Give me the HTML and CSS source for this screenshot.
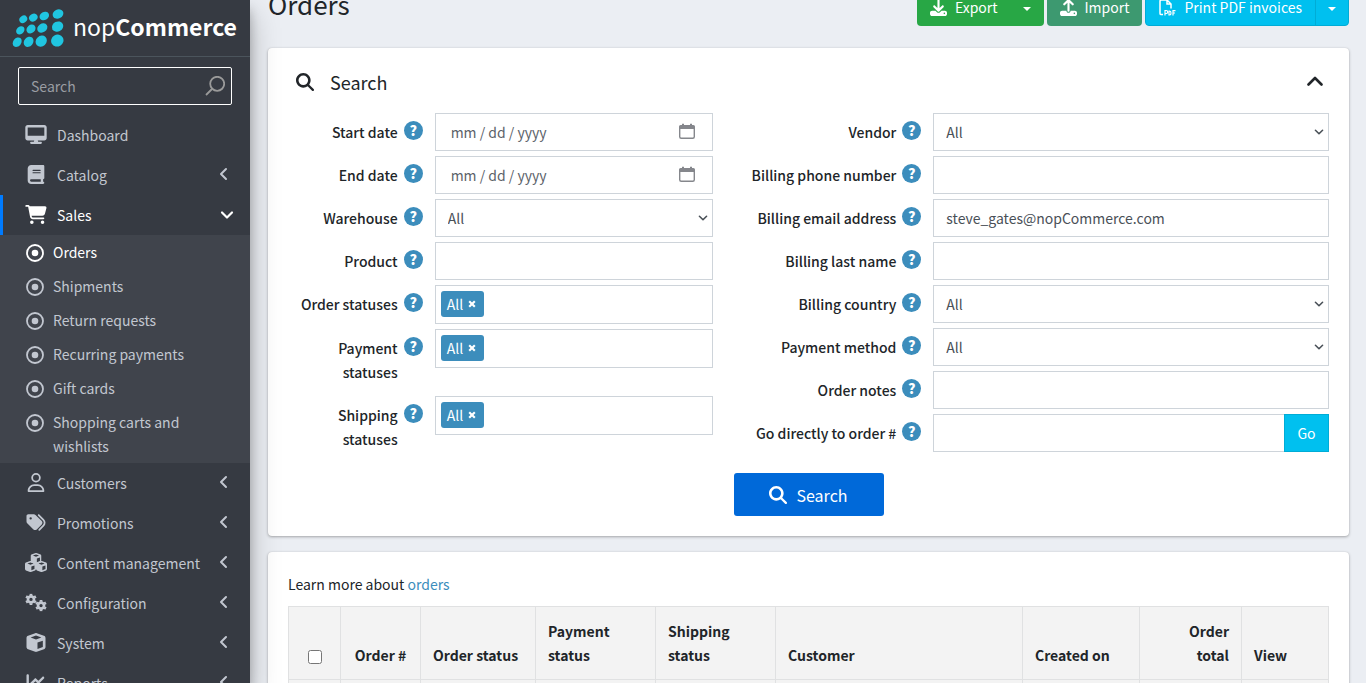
FILE: index.html
```html
<!DOCTYPE html>
<html lang="en">
<head>
<meta charset="utf-8">
<title>Orders / nopCommerce administration</title>
<link rel="stylesheet" href="styles.css">
</head>
<body>
<svg class="sprite" aria-hidden="true">
  <symbol id="i-search" viewBox="0 0 512 512"><path d="M416 208c0 45.900-14.900 88.300-40 122.700L502.600 457.400c12.500 12.500 12.500 32.800 0 45.300s-32.800 12.500-45.300 0L330.700 376c-34.400 25.200-76.800 40-122.700 40C93.100 416 0 322.900 0 208S93.100 0 208 0S416 93.100 416 208zM208 344a136 136 0 1 0 0-272 136 136 0 1 0 0 272z"/></symbol>
  <symbol id="i-left" viewBox="0 0 10 14"><path d="M8 2L3 7l5 5" fill="none" stroke="currentColor" stroke-width="2" stroke-linecap="round" stroke-linejoin="round"/></symbol>
  <symbol id="i-down" viewBox="0 0 14 10"><path d="M2 2.500l5 5 5-5" fill="none" stroke="currentColor" stroke-width="2.200" stroke-linecap="round" stroke-linejoin="round"/></symbol>
  <symbol id="i-dot" viewBox="0 0 18 18"><circle cx="9" cy="9" r="8" fill="none" stroke="currentColor" stroke-width="1.800"/><circle cx="9" cy="9" r="3.300"/></symbol>
  <symbol id="i-x" viewBox="0 0 8 8"><path d="M1.200 1.200l5.600 5.600M6.800 1.200L1.200 6.800" stroke="currentColor" stroke-width="2.100"/></symbol>
  <symbol id="i-cal" viewBox="0 0 18 18"><path d="M1 6V4a2 2 0 0 1 2-2h1V1q1-1 2 0v1h6V1q1-1 2 0v1h1a2 2 0 0 1 2 2v2z"/><rect x="1.700" y="3" width="14.600" height="12.300" rx="1.500" fill="none" stroke="currentColor" stroke-width="1.400"/></symbol>
  <symbol id="i-cube" viewBox="0 0 512 512"><path fill-rule="evenodd" d="M234.500 5.700c13.900-5 29.100-5 43.100 0l192 68.600C495 83.400 512 107.500 512 134.600V377.400c0 27-17 51.200-42.500 60.300l-192 68.600c-13.900 5-29.100 5-43.100 0l-192-68.600C17 428.600 0 404.500 0 377.400V134.600c0-27 17-51.200 42.500-60.300l192-68.600zM256 66L112 122 256 174l144-52L256 66zm40 362l144-51v-170L296 258z"/></symbol>
  <symbol id="i-cog" viewBox="0 0 20 20"><circle cx="10" cy="10" r="5" fill="none" stroke="currentColor" stroke-width="4.400"/><path d="M10 0.500v3M10 16.500v3M1.800 5.200l2.600 1.500M15.600 13.300l2.600 1.500M1.800 14.800l2.600-1.500M15.600 6.700l2.600-1.500" stroke="currentColor" stroke-width="4.600"/></symbol>
</svg>

<aside class="sidebar">
  <a class="brand" href="#">
    <svg class="brand-mark" viewBox="0 0 54 40" aria-hidden="true">
      <g fill="#20c5e0">
        <ellipse cx="11.300" cy="11.300" rx="4.200" ry="3.400" transform="rotate(-38 11.300 11.300)"/>
        <ellipse cx="21.300" cy="9.600" rx="4.500" ry="3.700" transform="rotate(-34 21.300 9.600)"/>
        <ellipse cx="32.300" cy="8" rx="5" ry="4" transform="rotate(-30 32.300 8)"/>
        <ellipse cx="46" cy="6" rx="5.500" ry="4.500" transform="rotate(-26 46 6)"/>
        <ellipse cx="8.300" cy="22.300" rx="4.600" ry="3.700" transform="rotate(-44 8.300 22.300)"/>
        <ellipse cx="19" cy="21" rx="4.900" ry="4" transform="rotate(-40 19 21)"/>
        <ellipse cx="30.300" cy="20" rx="5.400" ry="4.300" transform="rotate(-34 30.300 20)"/>
        <ellipse cx="45.600" cy="18.600" rx="5.800" ry="5" transform="rotate(-26 45.600 18.600)"/>
        <ellipse cx="5.200" cy="34.200" rx="5.200" ry="4" transform="rotate(-52 5.200 34.200)"/>
        <ellipse cx="16.600" cy="33.800" rx="5.500" ry="4.500" transform="rotate(-50 16.600 33.800)"/>
        <ellipse cx="29.200" cy="33.200" rx="6" ry="5.200" transform="rotate(-44 29.200 33.200)"/>
        <ellipse cx="45.300" cy="32.600" rx="6.300" ry="5.900" transform="rotate(-30 45.300 32.600)"/>
      </g>
    </svg>
    <span class="brand-name">nop<b>Commerce</b></span>
  </a>
  <form class="side-search">
    <input type="text" placeholder="Search" aria-label="Search menu">
    <svg class="lens" viewBox="0 0 20 20" aria-hidden="true"><circle cx="12.200" cy="7.800" r="7" /><path d="M7 13l-6 6"/></svg>
  </form>
  <nav>
    <ul class="menu">
      <li><a class="item" href="#"><svg class="ico" viewBox="0 0 576 512"><path fill-rule="evenodd" d="M64 0C28.700 0 0 28.700 0 64V352c0 35.300 28.700 64 64 64H240l-10.700 32H160c-17.700 0-32 14.300-32 32s14.300 32 32 32H416c17.700 0 32-14.300 32-32s-14.300-32-32-32H346.700L336 416H512c35.300 0 64-28.700 64-64V64c0-35.300-28.700-64-64-64H64zM512 64V288H64V64H512z"/></svg><span>Dashboard</span></a></li>
      <li><a class="item" href="#"><svg class="ico" viewBox="0 0 448 512"><path fill-rule="evenodd" d="M96 0C43 0 0 43 0 96V416c0 53 43 96 96 96H384h32c17.700 0 32-14.300 32-32s-14.300-32-32-32V384c17.700 0 32-14.300 32-32V32c0-17.700-14.300-32-32-32H384 96zm0 384H352v64H96c-17.700 0-32-14.300-32-32s14.300-32 32-32zm32-240c0-8.800 7.200-16 16-16H336c8.800 0 16 7.200 16 16s-7.200 16-16 16H144c-8.800 0-16-7.200-16-16zm16 48H336c8.800 0 16 7.200 16 16s-7.200 16-16 16H144c-8.800 0-16-7.200-16-16s7.200-16 16-16z"/></svg><span>Catalog</span><svg class="arrow"><use href="#i-left"/></svg></a></li>
      <li>
        <a class="item open" href="#"><svg class="ico" viewBox="0 0 576 512"><path d="M0 24C0 10.700 10.700 0 24 0H69.500c22 0 41.500 12.800 50.600 32h411c26.300 0 45.500 25 38.600 50.400l-41 152.300c-8.500 31.400-37 53.300-69.500 53.300H170.700l5.400 28.500c2.200 11.300 12.100 19.500 23.600 19.500H488c13.300 0 24 10.700 24 24s-10.700 24-24 24H199.700c-34.600 0-64.300-24.600-70.700-58.500L77.400 54.500c-.7-3.800-4-6.500-7.900-6.500H24C10.700 48 0 37.300 0 24zM128 464a48 48 0 1 1 96 0 48 48 0 1 1 -96 0zm336-48a48 48 0 1 1 0 96 48 48 0 1 1 0-96z"/></svg><span>Sales</span><svg class="arrow-down"><use href="#i-down"/></svg></a>
        <ul class="submenu">
          <li><a class="sub current" href="#"><svg><use href="#i-dot"/></svg><span>Orders</span></a></li>
          <li><a class="sub" href="#"><svg><use href="#i-dot"/></svg><span>Shipments</span></a></li>
          <li><a class="sub" href="#"><svg><use href="#i-dot"/></svg><span>Return requests</span></a></li>
          <li><a class="sub" href="#"><svg><use href="#i-dot"/></svg><span>Recurring payments</span></a></li>
          <li><a class="sub" href="#"><svg><use href="#i-dot"/></svg><span>Gift cards</span></a></li>
          <li><a class="sub" href="#"><svg><use href="#i-dot"/></svg><span>Shopping carts and wishlists</span></a></li>
        </ul>
      </li>
      <li><a class="item" href="#"><svg class="ico" viewBox="0 0 448 512"><path fill-rule="evenodd" d="M304 128a80 80 0 1 0 -160 0 80 80 0 1 0 160 0zM96 128a128 128 0 1 1 256 0A128 128 0 1 1 96 128zM49.300 464H398.700c-8.900-63.300-63.300-112-129-112H178.300c-65.700 0-120.100 48.700-129 112zM0 482.300C0 383.800 79.800 304 178.300 304h91.400C368.200 304 448 383.800 448 482.300c0 16.400-13.300 29.700-29.700 29.700H29.700C13.300 512 0 498.700 0 482.300z"/></svg><span>Customers</span><svg class="arrow"><use href="#i-left"/></svg></a></li>
      <li><a class="item" href="#"><svg class="ico" viewBox="0 0 512 512"><path fill-rule="evenodd" d="M345 39.100L472.800 168.400c52.400 53 52.400 138.200 0 191.200L360.800 472.900c-9.300 9.400-24.500 9.500-33.900 .2s-9.500-24.500-.2-33.900L438.600 325.900c33.900-34.300 33.900-89.400 0-123.700L310.900 72.900c-9.300-9.400-9.200-24.600 .2-33.900s24.600-9.200 33.900 .2zM0 229.500V80C0 53.500 21.500 32 48 32H197.500c17 0 33.300 6.700 45.300 18.700l168 168c25 25 25 65.500 0 90.500L277.300 442.700c-25 25-65.500 25-90.500 0l-168-168C6.700 262.700 0 246.500 0 229.500zM144 144a32 32 0 1 0 -64 0 32 32 0 1 0 64 0z"/></svg><span>Promotions</span><svg class="arrow"><use href="#i-left"/></svg></a></li>
      <li><a class="item" href="#"><svg class="ico" viewBox="0 0 22 19"><use href="#i-cube" x="5.500" y="0" width="11" height="11"/><use href="#i-cube" x="0" y="8" width="11" height="11"/><use href="#i-cube" x="11" y="8" width="11" height="11"/></svg><span>Content management</span><svg class="arrow"><use href="#i-left"/></svg></a></li>
      <li><a class="item" href="#"><svg class="ico" viewBox="0 0 23 19"><use href="#i-cog" x="0" y="0" width="12.500" height="12.500"/><use href="#i-cog" x="10.500" y="6.500" width="12.500" height="12.500"/></svg><span>Configuration</span><svg class="arrow"><use href="#i-left"/></svg></a></li>
      <li><a class="item" href="#"><svg class="ico"><use href="#i-cube"/></svg><span>System</span><svg class="arrow"><use href="#i-left"/></svg></a></li>
      <li><a class="item" href="#"><svg class="ico" viewBox="0 0 512 512"><path d="M64 64c0-17.700-14.300-32-32-32S0 46.300 0 64V400c0 44.200 35.800 80 80 80H480c17.700 0 32-14.300 32-32s-14.300-32-32-32H80c-8.800 0-16-7.200-16-16V64zm406.600 86.600c12.500-12.500 12.500-32.800 0-45.300s-32.800-12.500-45.300 0L320 210.700l-57.400-57.400c-12.500-12.500-32.800-12.500-45.300 0l-112 112c-12.500 12.500-12.500 32.800 0 45.300s32.800 12.500 45.300 0L240 221.300l57.400 57.400c12.500 12.500 32.800 12.500 45.300 0l128-128z"/></svg><span>Reports</span><svg class="arrow"><use href="#i-left"/></svg></a></li>
    </ul>
  </nav>
</aside>

<main class="content">
  <header class="page-head">
    <h1>Orders</h1>
    <div class="actions">
      <div class="group green">
        <button type="button" class="btn"><svg viewBox="0 0 512 512"><path fill-rule="evenodd" d="M288 32c0-17.700-14.300-32-32-32s-32 14.300-32 32V274.700l-73.400-73.400c-12.500-12.500-32.800-12.500-45.300 0s-12.500 32.800 0 45.300l128 128c12.500 12.500 32.800 12.500 45.300 0l128-128c12.500-12.500 12.500-32.800 0-45.300s-32.800-12.500-45.300 0L288 274.700V32zM64 352c-35.300 0-64 28.700-64 64v32c0 35.300 28.700 64 64 64H448c35.300 0 64-28.700 64-64V416c0-35.300-28.700-64-64-64H346.500l-45.300 45.300c-25 25-65.500 25-90.500 0L165.500 352H64zm368 56a24 24 0 1 1 0 48 24 24 0 1 1 0-48z"/></svg>Export</button>
        <button type="button" class="toggle" aria-label="More export options"></button>
      </div>
      <div class="group olive">
        <button type="button" class="btn"><svg viewBox="0 0 512 512"><path fill-rule="evenodd" d="M288 109.300V352c0 17.700-14.300 32-32 32s-32-14.300-32-32V109.300l-73.400 73.400c-12.500 12.500-32.800 12.500-45.300 0s-12.500-32.800 0-45.300l128-128c12.500-12.500 32.800-12.500 45.300 0l128 128c12.500 12.500 12.500 32.800 0 45.300s-32.800 12.500-45.300 0L288 109.300zM64 352H192c0 35.300 28.700 64 64 64s64-28.700 64-64H448c35.300 0 64 28.700 64 64v32c0 35.300-28.700 64-64 64H64c-35.300 0-64-28.700-64-64V416c0-35.300 28.700-64 64-64zM432 456a24 24 0 1 0 0-48 24 24 0 1 0 0 48z"/></svg>Import</button>
      </div>
      <div class="group cyan">
        <button type="button" class="btn"><svg viewBox="0 0 17 17"><path d="M4 15.600H2.200Q1 15.600 1 14.400V2.200Q1 1 2.200 1H8l4 4v4.500M8 1v4h4" fill="none" stroke="currentColor" stroke-width="1.500"/><g fill="none" stroke="currentColor" stroke-width="1.200"><path d="M6 16.500v-5h1.200a1.400 1.400 0 0 1 0 3H6M10 12v4h.6q1.400-.1 1.400-2t-1.400-2zM14 16.500v-4.900h2.500M14 14h2"/></g></svg>Print PDF invoices</button>
        <button type="button" class="toggle" aria-label="More print options"></button>
      </div>
    </div>
  </header>

  <section class="card">
    <div class="card-head">
      <svg class="head-ico"><use href="#i-search"/></svg>
      <h2>Search</h2>
      <button type="button" class="collapse" aria-label="Collapse search"><svg viewBox="0 0 16 10"><path d="M1.500 8.500L8 2l6.500 6.500"/></svg></button>
    </div>
    <form class="filters">
      <div class="col-left">
        <div class="row"><label for="start">Start date</label><button type="button" class="help">?</button><div class="date"><input id="start" type="text" placeholder="mm / dd / yyyy"><svg><use href="#i-cal"/></svg></div></div>
        <div class="row"><label for="end">End date</label><button type="button" class="help">?</button><div class="date"><input id="end" type="text" placeholder="mm / dd / yyyy"><svg><use href="#i-cal"/></svg></div></div>
        <div class="row"><label for="warehouse">Warehouse</label><button type="button" class="help">?</button><div class="pick"><select id="warehouse"><option>All</option></select><svg><use href="#i-down"/></svg></div></div>
        <div class="row"><label for="product">Product</label><button type="button" class="help">?</button><input id="product" class="field" type="text"></div>
        <div class="row"><label for="ostat">Order statuses</label><button type="button" class="help">?</button><div class="tags"><span class="tag">All<button type="button" aria-label="Remove All"><svg><use href="#i-x"/></svg></button></span><input id="ostat" type="text"></div></div>
        <div class="row"><label for="pstat">Payment statuses</label><button type="button" class="help">?</button><div class="tags"><span class="tag">All<button type="button" aria-label="Remove All"><svg><use href="#i-x"/></svg></button></span><input id="pstat" type="text"></div></div>
        <div class="row"><label for="sstat">Shipping statuses</label><button type="button" class="help">?</button><div class="tags"><span class="tag">All<button type="button" aria-label="Remove All"><svg><use href="#i-x"/></svg></button></span><input id="sstat" type="text"></div></div>
      </div>
      <div class="col-right">
        <div class="row"><label for="vendor">Vendor</label><button type="button" class="help">?</button><div class="pick"><select id="vendor"><option>All</option></select><svg><use href="#i-down"/></svg></div></div>
        <div class="row"><label for="phone">Billing phone number</label><button type="button" class="help">?</button><input id="phone" class="field" type="text"></div>
        <div class="row"><label for="email">Billing email address</label><button type="button" class="help">?</button><input id="email" class="field" type="text" value="steve_gates@nopCommerce.com"></div>
        <div class="row"><label for="lname">Billing last name</label><button type="button" class="help">?</button><input id="lname" class="field" type="text"></div>
        <div class="row"><label for="country">Billing country</label><button type="button" class="help">?</button><div class="pick"><select id="country"><option>All</option></select><svg><use href="#i-down"/></svg></div></div>
        <div class="row"><label for="method">Payment method</label><button type="button" class="help">?</button><div class="pick"><select id="method"><option>All</option></select><svg><use href="#i-down"/></svg></div></div>
        <div class="row"><label for="notes">Order notes</label><button type="button" class="help">?</button><input id="notes" class="field" type="text"></div>
        <div class="row"><label for="goto">Go directly to order #</label><button type="button" class="help">?</button><div class="joined"><input id="goto" class="field" type="text"><button type="button" class="go">Go</button></div></div>
      </div>
      <button type="submit" class="submit"><svg><use href="#i-search"/></svg>Search</button>
    </form>
  </section>

  <section class="card">
    <p class="hint">Learn more about <a href="#">orders</a></p>
    <table>
      <colgroup><col class="w-check"><col class="w-num"><col class="w-status"><col class="w-pay"><col class="w-pay"><col><col class="w-date"><col class="w-total"><col class="w-view"></colgroup>
      <thead>
        <tr><th class="mid"><input type="checkbox" aria-label="Select all orders"></th><th class="mid">Order #</th><th>Order status</th><th>Payment status</th><th>Shipping status</th><th>Customer</th><th>Created on</th><th class="end">Order<br>total</th><th>View</th></tr>
      </thead>
      <tbody>
        <tr><td></td><td></td><td></td><td></td><td></td><td></td><td></td><td></td><td></td></tr>
      </tbody>
    </table>
  </section>
</main>
</body>
</html>
```
FILE: styles.css
```css
* { box-sizing: border-box; }

html, body { height: 100%; }

body {
  margin: 0;
  display: flex;
  overflow: hidden;
  background: #ebeef3;
  color: #212529;
  font: 14px/24px "Noto Sans CJK SC", "Open Sans", sans-serif;
}

button, input, select { font: inherit; }
button { border: 0; padding: 0; cursor: pointer; }
svg { fill: currentColor; flex: none; }
ul { list-style: none; margin: 0; padding: 0; }
a { text-decoration: none; }
.sprite { position: absolute; width: 0; height: 0; }

/* Sidebar */
.sidebar {
  position: relative;
  z-index: 1;
  flex: none;
  width: 250px;
  height: 100vh;
  overflow: hidden;
  background: #363a42;
  color: #c2c7d0;
  box-shadow: 0 14px 28px rgba(0, 0, 0, .25), 0 10px 10px rgba(0, 0, 0, .22);
}
.brand {
  display: flex;
  align-items: center;
  gap: 7px;
  height: 57px;
  padding: 0 12px;
  border-bottom: 1px solid #4b545c;
  color: #fff;
}
.brand-mark { width: 54px; height: 40px; }
.brand-name { padding-bottom: 5px; font-size: 23px; line-height: 40px; }
.side-search {
  display: flex;
  align-items: center;
  height: 38px;
  margin: 10px 18px;
  padding-right: 6px;
  border: 1px solid #fff;
  border-radius: 2px;
}
.side-search input {
  flex: 1;
  min-width: 0;
  padding: 0 12px;
  border: 0;
  background: none;
  color: #fff;
}
.side-search input::placeholder { color: #9a9da3; opacity: 1; }
.lens { width: 20px; height: 20px; fill: none; stroke: #9a9a9a; stroke-width: 1.800; }

.item {
  display: flex;
  align-items: center;
  height: 40px;
  padding: 0 22px;
  border-left: 3px solid transparent;
  color: inherit;
}
.ico { width: 22px; height: 19px; margin: 0 10px 2px 0; }
.item span { flex: 1; }
.arrow { width: 10px; height: 14px; margin-bottom: 2px; }
.arrow-down { width: 14px; height: 10px; margin-right: -6px; }
.open { border-color: #007bff; color: #fff; }

.submenu { background: #40444c; }
.sub {
  display: flex;
  align-items: flex-start;
  gap: 9px;
  padding: 5px 50px 5px 26px;
  color: inherit;
}
.sub svg { width: 18px; height: 18px; margin-top: 4px; }
.current { color: #fff; }

/* The page is scrolled a little, so the heading row starts above the window */
.content {
  flex: 1;
  min-width: 0;
  margin-top: -12px;
  padding: 0 17px 0 18px;
}
.page-head {
  display: flex;
  justify-content: space-between;
  align-items: flex-start;
  height: 38px;
  margin-bottom: 22px;
}
h1 { margin: 0; font-size: 26px; line-height: 32px; font-weight: 400; }
.actions { display: flex; gap: 3px; }
.group { display: flex; height: 38px; border-radius: 4px; color: #fff; overflow: hidden; }
.group button { background: none; color: inherit; }
.btn { display: flex; align-items: center; gap: 8px; padding: 0 13px; }
.btn svg { width: 17px; height: 17px; }
.toggle { width: 33px; }
.toggle::before {
  content: "";
  display: inline-block;
  vertical-align: middle;
  border: 4px solid transparent;
  border-top-color: #fff;
  border-bottom: 0;
}
.green { background: #28a745; }
.olive { background: #3d9970; }
.cyan { background: #00c0ef; border: 1px solid #00acd6; }
.cyan .toggle { border-left: 1px solid #00acd6; }

/* Cards */
.card {
  margin-bottom: 16px;
  padding: 20px;
  border-radius: 4px;
  background: #fff;
  box-shadow: 0 0 1px rgba(0, 0, 0, .13), 0 1px 3px rgba(0, 0, 0, .3);
}
.card-head {
  display: flex;
  align-items: center;
  height: 28px;
  margin-bottom: 17px;
  padding: 0 6px 0 8px;
}
.head-ico { width: 18px; height: 18px; }
h2 { flex: 1; margin: 0 0 0 16px; font-size: 18px; line-height: 28px; font-weight: 400; }
.collapse { display: flex; padding-bottom: 3px; background: none; }
.collapse svg { width: 16px; height: 10px; fill: none; stroke: #212529; stroke-width: 2.600; stroke-linejoin: round; stroke-linecap: round; }

.filters { display: grid; grid-template-columns: repeat(12, 1fr); gap: 15px; }
.col-left { grid-column: span 5; }
.col-right { grid-column: span 7; }
.col-left, .col-right { display: flex; flex-direction: column; gap: 5px; }
.row {
  display: grid;
  grid-template-columns: calc((100% + 15px) / 3 - 37px) 19px 1fr;
  align-items: start;
}
.row label { padding: 7px 0; text-align: right; font-weight: 500; }
.row label + .help { margin: 8px 0 0 6px; }
.row > :last-child { margin-left: 18px; }
.help {
  width: 19px;
  height: 19px;
  border-radius: 50%;
  background: #3c8dbc;
  color: #fff;
  font-weight: 900;
  line-height: 19px;
}
.field, .date, .pick, .tags {
  display: flex;
  align-items: center;
  height: 38px;
  min-width: 0;
  border: 1px solid #ced4da;
  background: #fff;
  color: #495057;
}
.field { padding: 0 12px; }
.date { padding: 0 16px 0 15px; }
.date input, .tags input { flex: 1; min-width: 0; padding: 0; border: 0; background: none; outline: 0; }
.date input::placeholder { color: #5c636a; opacity: 1; }
.date svg { width: 18px; height: 18px; color: #85878c; }
.pick { position: relative; }
.pick select {
  width: 100%;
  height: 36px;
  padding: 0 24px 0 12px;
  border: 0;
  background: none;
  color: inherit;
  appearance: none;
}
.pick svg { position: absolute; right: 4px; width: 10px; height: 8px; pointer-events: none; }
.tags { height: 39px; padding: 0 5px 1px; gap: 5px; }
.tag {
  display: flex;
  align-items: center;
  gap: 5px;
  height: 26px;
  padding: 0 8px 0 6px;
  border-radius: 3px;
  background: #3c8dbc;
  color: #fff;
}
.tag button { display: flex; background: none; color: inherit; }
.tag svg { width: 8px; height: 8px; }
.joined { display: flex; }
.joined .field { flex: 1; border-right: 0; }
.go { width: 45px; background: #00c0ef; border: 1px solid #00acd6; color: #fff; }
.submit {
  grid-column: 1 / -1;
  justify-self: center;
  display: flex;
  align-items: center;
  justify-content: center;
  gap: 9px;
  width: 150px;
  height: 43px;
  border-radius: 3px;
  background: #0069d9;
  color: #fff;
  font-size: 16px;
}
.submit svg { width: 18px; height: 18px; }

/* Orders table */
.hint { margin: 0 0 10px; }
.hint a { color: #3c8dbc; }
table { width: 100%; table-layout: fixed; border-collapse: collapse; }
th, td { border: 1px solid #e0e1e2; background: #f3f3f3; padding: 12px; }
th { vertical-align: bottom; text-align: left; font-weight: 700; }
td { height: 49px; }
.mid { text-align: center; }
th.mid { padding-left: 11px; padding-right: 11px; }
.end { text-align: right; }
th input { width: 14px; height: 14px; margin: 0; vertical-align: middle; }
.w-check { width: 5%; }
.w-num { width: 80px; }
.w-status { width: 115px; }
.w-pay { width: 120px; }
.w-date { width: 117px; }
.w-total { width: 102px; }
.w-view { width: 87px; }
```
